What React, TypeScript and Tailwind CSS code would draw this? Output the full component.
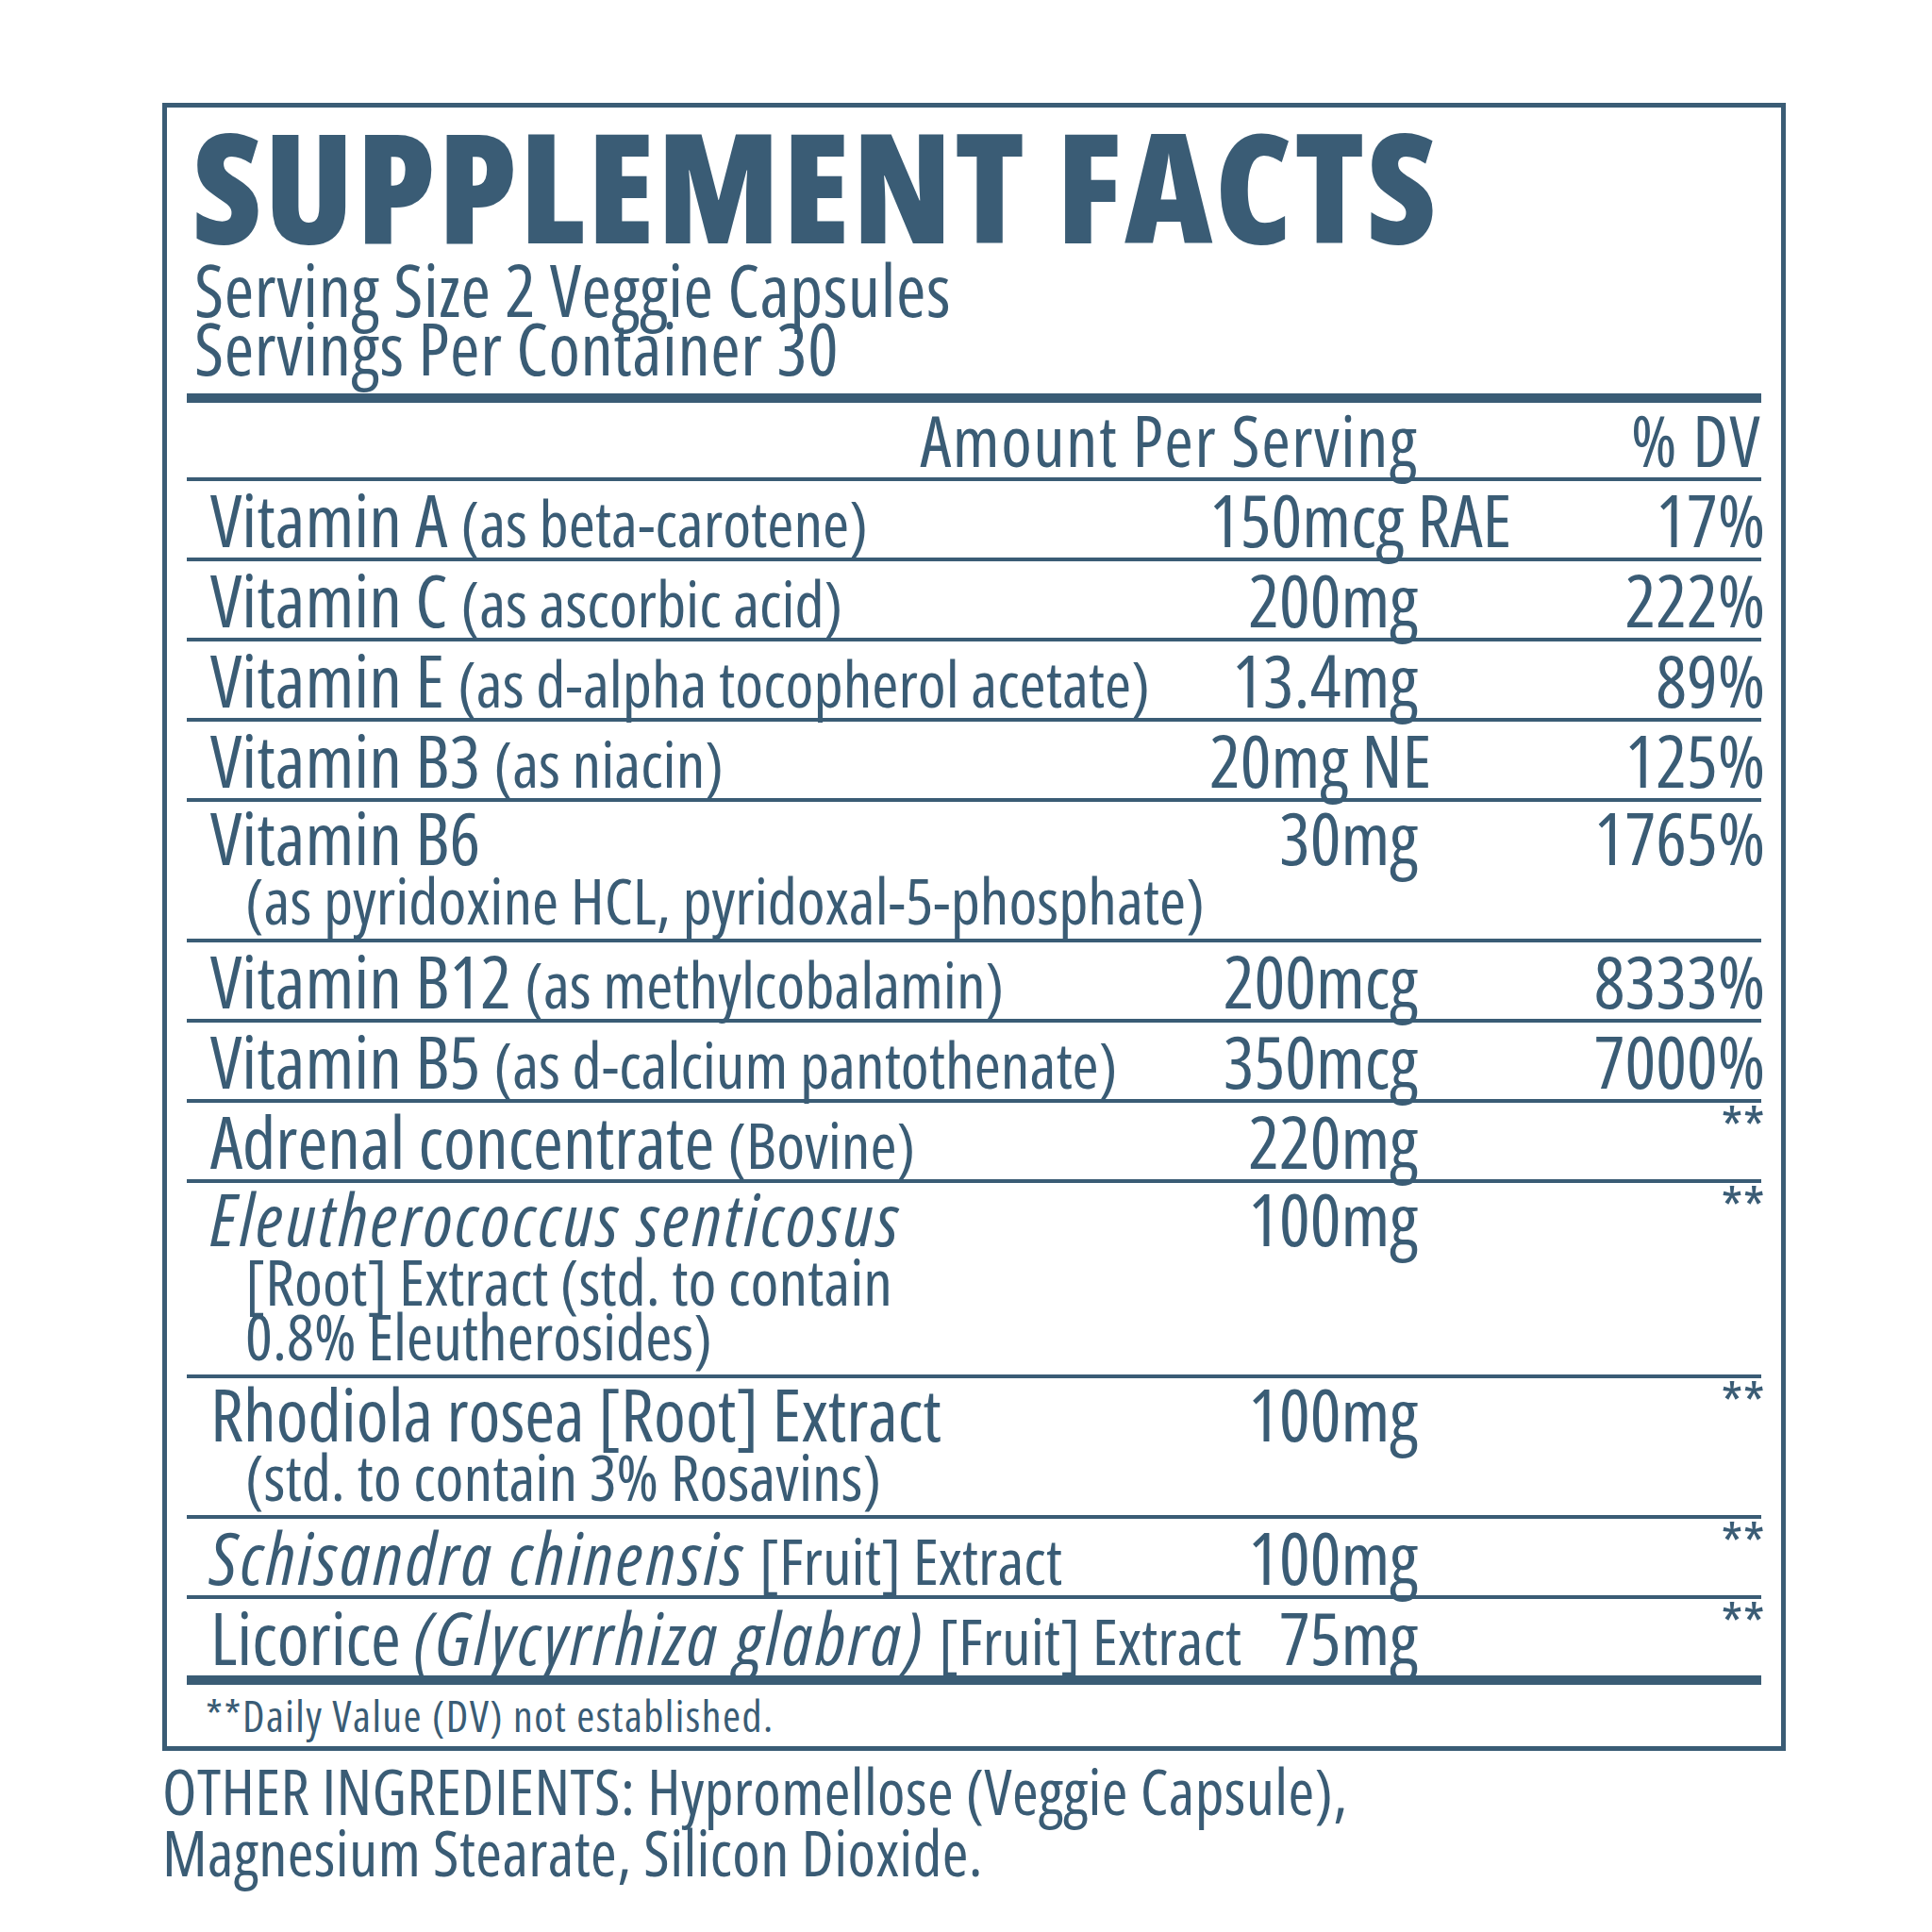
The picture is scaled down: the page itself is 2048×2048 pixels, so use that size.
import React from 'react';

type Row = {
  name: React.ReactNode;
  sub?: string[];
  amount: string;
  dv: string;
};

const Small = ({ children }: { children: React.ReactNode }) => (
  <span className="text-[68px] leading-none">{children}</span>
);

// italic cut of the condensed face runs narrower than the label, so space it out
const Latin = ({ children }: { children: React.ReactNode }) => (
  <em className="tracking-[3px]">{children}</em>
);

const rows: Row[] = [
  { name: <>Vitamin A <Small>(as beta-carotene)</Small></>, amount: '150mcg RAE', dv: '17%' },
  { name: <>Vitamin C <Small>(as ascorbic acid)</Small></>, amount: '200mg', dv: '222%' },
  { name: <>Vitamin E <Small>(as d-alpha tocopherol acetate)</Small></>, amount: '13.4mg', dv: '89%' },
  { name: <>Vitamin B3 <Small>(as niacin)</Small></>, amount: '20mg NE', dv: '125%' },
  {
    name: <>Vitamin B6</>,
    sub: ['(as pyridoxine HCL, pyridoxal-5-phosphate)'],
    amount: '30mg',
    dv: '1765%',
  },
  { name: <>Vitamin B12 <Small>(as methylcobalamin)</Small></>, amount: '200mcg', dv: '8333%' },
  { name: <>Vitamin B5 <Small>(as d-calcium pantothenate)</Small></>, amount: '350mcg', dv: '7000%' },
  { name: <>Adrenal concentrate <Small>(Bovine)</Small></>, amount: '220mg', dv: '**' },
  {
    name: <Latin>Eleutherococcus senticosus</Latin>,
    sub: ['[Root] Extract (std. to contain', '0.8% Eleutherosides)'],
    amount: '100mg',
    dv: '**',
  },
  {
    name: <>Rhodiola rosea [Root] Extract</>,
    sub: ['(std. to contain 3% Rosavins)'],
    amount: '100mg',
    dv: '**',
  },
  { name: <><Latin>Schisandra chinensis</Latin> <Small>[Fruit] Extract</Small></>, amount: '100mg', dv: '**' },
  {
    name: <>Licorice <Latin>(Glycyrrhiza glabra)</Latin> <Small>[Fruit] Extract</Small></>,
    amount: '75mg',
    dv: '**',
  },
];

const FactRow = ({ row }: { row: Row }) => (
  <div className="border-t-4 border-[#3a5c75]">
    <div
      className={`flex text-[77px] whitespace-nowrap ${
        row.sub ? 'h-[75px] leading-[75px]' : 'h-[81px] leading-[81px]'
      }`}
    >
      <div className="w-[1084px] shrink-0 pl-[25px]">{row.name}</div>
      <div className="w-[221px] shrink-0 text-right">{row.amount}</div>
      <div className="-mr-[4px] flex-1 text-right">
        {row.dv === '**' ? (
          <span className="block text-[60px] leading-[52px]">**</span>
        ) : (
          row.dv
        )}
      </div>
    </div>
    {row.sub && (
      <div className="pb-[12px] pl-[62px] text-[68px] leading-[58px] whitespace-nowrap">
        {row.sub.map((line) => (
          <div key={line}>{line}</div>
        ))}
      </div>
    )}
  </div>
);

export default function App() {
  return (
    <div className="min-h-screen bg-white pl-[172px] pt-[109px] font-['Open_Sans'] font-stretch-condensed text-[#3a5c75]">
      <div className="w-[1721px] border-[5px] border-[#3a5c75] px-[21px] pb-[8px]">
        <h1 className="pl-[6px] pt-[6px] text-[162px] font-extrabold leading-[150px] tracking-[2.3px]">
          SUPPLEMENT FACTS
        </h1>
        <div className="mt-[6px] pl-[8px] text-[76px] leading-[62px] tracking-[0.6px]">
          <div>Serving Size 2 Veggie Capsules</div>
          <div>Servings Per Container 30</div>
        </div>

        <div className="mt-[17px] h-[10px] bg-[#3a5c75]" />

        <div className="flex h-[79px] text-[74px] leading-[79px] whitespace-nowrap tracking-[1.5px]">
          <div className="flex-1 text-right">Amount Per Serving</div>
          <div className="w-[364px] text-right">% DV</div>
        </div>

        {rows.map((row, i) => (
          <FactRow key={i} row={row} />
        ))}

        <div className="h-[10px] bg-[#3a5c75]" />

        <p className="pl-[20px] pt-[7px] text-[46px] leading-[50px] tracking-[1.5px]">
          **Daily Value (DV) not established.
        </p>
      </div>

      <p className="mt-[10px] text-[67px] leading-[65px] tracking-[0.4px]">
        OTHER INGREDIENTS: Hypromellose (Veggie Capsule),
        <br />
        Magnesium Stearate, Silicon Dioxide.
      </p>
    </div>
  );
}
